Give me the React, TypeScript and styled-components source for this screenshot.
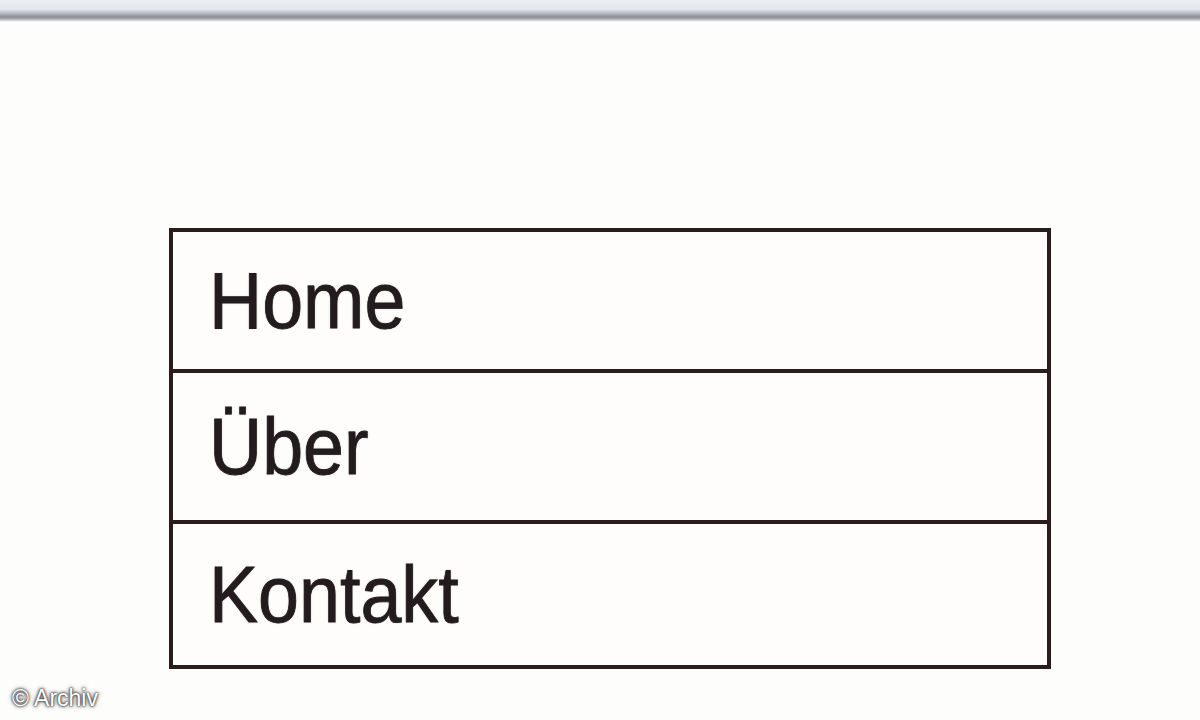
import React from "react";
import styled, { createGlobalStyle } from "styled-components";

const Global = createGlobalStyle`
  html, body { margin: 0; padding: 0; background: #fdfdfb; }
  body { font-family: "Liberation Sans", Arial, sans-serif; }
`;

const Page = styled.div`
  position: relative;
  width: 1200px;
  height: 720px;
  overflow: hidden;
  background: #fdfdfb;
`;

const TopBar = styled.div`
  height: 22px;
  background: linear-gradient(
    to bottom,
    #eceff4 0px,
    #e4e7ec 9px,
    #b9bcc2 13px,
    #8b8e94 17px,
    #a9abaf 19px,
    #e6e6e6 21px,
    #fdfdfb 22px
  );
`;

const Menu = styled.ul`
  list-style: none;
  margin: 206px 0 0 169px;
  padding: 0;
  width: 874px;
  border: 4px solid #2a1b1c;
  background: #fffdfc;
`;

const Item = styled.li<{ $h: number; $last?: boolean }>`
  display: flex;
  align-items: center;
  height: ${(p) => p.$h}px;
  padding-left: 36px;
  border-bottom: ${(p) => (p.$last ? "none" : "4px solid #2a1b1c")};
`;

const Label = styled.span`
  display: inline-block;
  font-family: "Liberation Sans", Arial, sans-serif;
  font-size: 80px;
  line-height: 1;
  color: #221c1e;
  -webkit-text-stroke: 0.8px #221c1e;
  text-shadow: 0 0 1.5px rgba(40, 30, 35, 0.5);
  transform: scaleX(0.92);
  transform-origin: left center;
  white-space: nowrap;
`;

const Credit = styled.div`
  position: absolute;
  left: 12px;
  bottom: 10px;
  font-family: "Liberation Sans", Arial, sans-serif;
  font-size: 23px;
  line-height: 1;
  color: #ffffff;
  text-shadow: 0 0 2px #222, 0 0 3px #444, 0 0 5px #666;
`;

const items = [
  { label: "Home", h: 137 },
  { label: "Über", h: 147 },
  { label: "Kontakt", h: 141 },
];

export default function App() {
  return (
    <Page>
      <Global />
      <TopBar />
      <Menu>
        {items.map((it, i) => (
          <Item key={it.label} $h={it.h} $last={i === items.length - 1}>
            <Label>{it.label}</Label>
          </Item>
        ))}
      </Menu>
      <Credit>© Archiv</Credit>
    </Page>
  );
}
